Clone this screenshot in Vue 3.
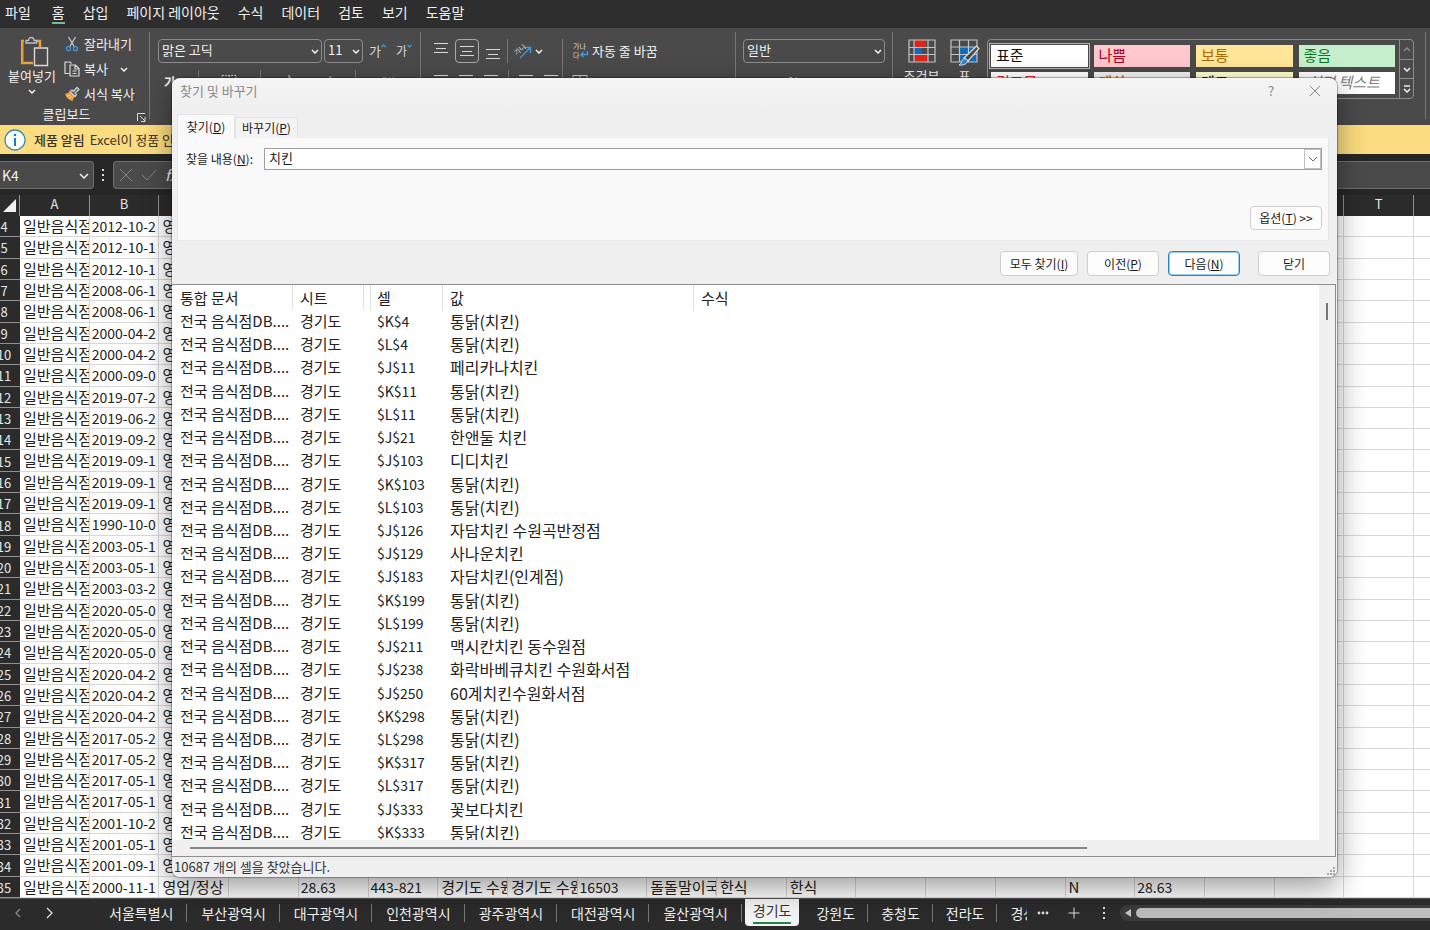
<script setup>
import { ref } from 'vue'

const menus = ['파일', '홈', '삽입', '페이지 레이아웃', '수식', '데이터', '검토', '보기', '도움말']

const styleCells = [
  { name: '표준', kind: 'normal' },
  { name: '나쁨', kind: 'bad' },
  { name: '보통', kind: 'neutral' },
  { name: '좋음', kind: 'good' },
  { name: '경고문', kind: 'warning' },
  { name: '계산', kind: 'calc' },
  { name: '메모', kind: 'memo' },
  { name: '설명 텍스트', kind: 'explain' },
]

const columns = [...'ABCDEFGHIJKLMNOPQRST', '']
const dates = [
  '2012-10-2', '2012-10-1', '2012-10-1', '2008-06-1', '2008-06-1', '2000-04-2', '2000-04-2', '2000-09-0',
  '2019-07-2', '2019-06-2', '2019-09-2', '2019-09-1', '2019-09-1', '2019-09-1', '1990-10-0', '2003-05-1',
  '2003-05-1', '2003-03-2', '2020-05-0', '2020-05-0', '2020-05-0', '2020-04-2', '2020-04-2', '2020-04-2',
  '2017-05-2', '2017-05-2', '2017-05-1', '2017-05-1', '2001-10-2', '2001-05-1', '2001-09-1', '2000-11-1',
]
const lastRow = { C: '영업/정상', E: '28.63', F: '443-821', G: '경기도 수원', H: '경기도 수원', I: '16503', J: '돌돌말이국', K: '한식', L: '한식', P: 'N', Q: '28.63' }
const rows = dates.map((date, i) => {
  const extra = i === dates.length - 1 ? lastRow : {}
  const values = { A: '일반음식점', B: date, C: '영', ...extra }
  return { n: i + 4, cells: columns.map((c) => values[c] || '') }
})
const isNumeric = (v) => /^[\d.-]+$/.test(v)

const fried = '통닭(치킨)'
const results = [
  ['$K$4', fried], ['$L$4', fried], ['$J$11', '페리카나치킨'], ['$K$11', fried], ['$L$11', fried],
  ['$J$21', '한앤둘 치킨'], ['$J$103', '디디치킨'], ['$K$103', fried], ['$L$103', fried],
  ['$J$126', '자담치킨 수원곡반정점'], ['$J$129', '사나운치킨'], ['$J$183', '자담치킨(인계점)'],
  ['$K$199', fried], ['$L$199', fried], ['$J$211', '맥시칸치킨 동수원점'],
  ['$J$238', '화락바베큐치킨 수원화서점'], ['$J$250', '60계치킨수원화서점'], ['$K$298', fried],
  ['$L$298', fried], ['$K$317', fried], ['$L$317', fried], ['$J$333', '꽃보다치킨'], ['$K$333', fried],
]

const sheets = ['서울특별시', '부산광역시', '대구광역시', '인천광역시', '광주광역시', '대전광역시', '울산광역시', '경기도', '강원도', '충청도', '전라도']
const query = ref('치킨')
</script>

<template>
  <div class="app">
    <nav class="menu">
      <button v-for="m in menus" :key="m" :class="{ on: m === '홈' }">{{ m }}</button>
    </nav>

    <header class="ribbon">
      <section class="group clipboard">
        <div class="clip-main">
          <button class="paste">
            <svg width="30" height="32" viewBox="0 0 30 32" fill="none">
              <path d="M5 5H3.200V27H14" stroke="#e9a13b" stroke-width="2.500" />
              <path d="M18 5H21V11" stroke="#e9a13b" stroke-width="2.500" />
              <path d="M7 7V4.500H9.500C9.500 0.500 15 0.500 15 4.500H17.500V7Z" fill="#4a4a4a" stroke="#bdbdbd" stroke-width="1.300" />
              <path d="M15.500 12H28.500V29.500H15.500Z" fill="#4a4a4a" stroke="#d8d8d8" stroke-width="1.400" />
            </svg>
            <span>붙여넣기</span>
            <svg class="chev" width="8" height="5" viewBox="0 0 8 5"><path d="M1 1L4 4L7 1" /></svg>
          </button>
          <div class="clip-list">
            <button>
              <svg width="16" height="16" viewBox="0 0 16 16" fill="none">
                <path d="M4.500 1L10.500 11M11.500 1L5.500 11" stroke="#cfcfcf" stroke-width="1.200" />
                <circle cx="4.500" cy="12.700" r="2" stroke="#3d9be0" stroke-width="1.300" /><circle cx="11.500" cy="12.700" r="2" stroke="#3d9be0" stroke-width="1.300" />
              </svg>잘라내기
            </button>
            <button>
              <svg width="16" height="16" viewBox="0 0 16 16" fill="none" stroke="#d8d8d8" stroke-width="1.200">
                <path d="M5.500 12.500H1V1H6L7.500 2.500" /><path d="M6 4H11.500L15 7.500V15H6ZM11 4V8H15M8.500 10H12.500M8.500 12.500H12.500" />
              </svg>복사
              <svg class="chev more" width="8" height="5" viewBox="0 0 8 5"><path d="M1 1L4 4L7 1" /></svg>
            </button>
            <button>
              <svg width="16" height="16" viewBox="0 0 16 16" fill="none">
                <path d="M1 8L6 6L10.500 10.500L8.500 15C5 14 2 11.500 1 8Z" fill="#e9a13b" /><path d="M3 10L6 9.500M5 12.500L7.500 11" stroke="#fbe2b8" />
                <path d="M6 5.500L8 4L9.500 5.500L13 1.500L15 3.500L11 7L12.500 8.500L11 10.500Z" fill="#4a4a4a" stroke="#d8d8d8" stroke-width="1.200" />
              </svg>서식 복사
            </button>
          </div>
        </div>
        <div class="caption">클립보드
          <svg class="launch" width="9" height="9" viewBox="0 0 9 9" fill="none" stroke="#d8d8d8"><path d="M0.500 8V0.500H8M3 3L8 8M8 4V8.500H4" /></svg>
        </div>
      </section>

      <section class="group font">
        <div class="line">
          <label class="pick face"><select aria-label="글꼴"><option>맑은 고딕</option></select><svg class="chev" width="8" height="5" viewBox="0 0 8 5"><path d="M1 1L4 4L7 1" /></svg></label>
          <label class="pick size"><select aria-label="글꼴 크기"><option>11</option></select><svg class="chev" width="8" height="5" viewBox="0 0 8 5"><path d="M1 1L4 4L7 1" /></svg></label>
          <button class="grow" aria-label="글꼴 크기 크게">가<svg class="blue" width="5" height="4" viewBox="0 0 5 4"><path d="M0.500 3L2.500 1L4.500 3" /></svg></button>
          <button class="grow less" aria-label="글꼴 크기 작게">가<svg class="blue" width="5" height="4" viewBox="0 0 5 4"><path d="M0.500 1L2.500 3L4.500 1" /></svg></button>
        </div>
        <div class="line second">
          <button><b>가</b></button>
          <i class="bar"></i>
          <svg width="16" height="16" viewBox="0 0 16 16" fill="none" stroke="#c8c8c8"><path d="M1 1.500H15V15H1ZM8 1V15M1 8H15" stroke-dasharray="2 1" /></svg>
          <i class="bar"></i>
          <svg width="16" height="16" viewBox="0 0 16 16" fill="none" stroke="#c8c8c8"><path d="M6 1V4M2 8L7 3L12 8L7 13Z" /></svg>
          <button>가</button>
          <i class="bar"></i>
          <button class="tiny">내천</button>
        </div>
      </section>

      <section class="group align">
        <div class="align-left">
          <div class="line">
            <button aria-label="위쪽 맞춤"><svg class="rule" width="16" height="24" viewBox="0 0 16 24"><path d="M1 4.500H15M3 9.500H13M1 13.500H15" /></svg></button>
            <button class="boxed" aria-label="가운데 맞춤"><svg class="rule" width="16" height="24" viewBox="0 0 16 24"><path d="M1 7.500H15M3 12.500H13M1 16.500H15" /></svg></button>
            <button aria-label="아래쪽 맞춤"><svg class="rule" width="16" height="24" viewBox="0 0 16 24"><path d="M1 10.500H15M3 15.500H13M1 19.500H15" /></svg></button>
            <i class="bar"></i>
            <button class="orient" aria-label="방향">
              <svg width="18" height="18" viewBox="0 0 18 18" fill="none"><path d="M6 16L16 6M11 5.500H16.500V11" stroke="#3d9be0" stroke-width="1.300" /><text x="0" y="11" font-size="7" fill="#d8d8d8" transform="rotate(-40 5 9)">가나</text></svg>
              <svg class="chev" width="8" height="5" viewBox="0 0 8 5"><path d="M1 1L4 4L7 1" /></svg>
            </button>
          </div>
          <div class="line second">
            <svg v-for="k in 3" :key="k" class="rule" width="16" height="16" viewBox="0 0 16 16"><path d="M1 1.500H15M1 6.500H10M1 11.500H15" /></svg>
            <i class="bar"></i>
            <svg v-for="k in 2" :key="'i' + k" class="rule" width="16" height="16" viewBox="0 0 16 16"><path d="M1 1.500H15M7 6.500H15M1 11.500H15" /></svg>
          </div>
        </div>
        <div class="align-right">
          <button class="wrap">
            <svg width="17" height="18" viewBox="0 0 17 18" fill="none"><text x="1" y="7" font-size="7" fill="#d8d8d8">가나</text><text x="1" y="16" font-size="7" fill="#d8d8d8">다</text><path d="M15.500 9V12.500H9M11.500 10L9 12.500L11.500 15" stroke="#3d9be0" stroke-width="1.400" /></svg>
            자동 줄 바꿈
          </button>
          <div class="line second"><svg width="16" height="16" viewBox="0 0 16 16" fill="none" stroke="#c8c8c8"><path d="M1 1.500H15V14.500H1ZM1 5H15M8 1V5" /></svg></div>
        </div>
      </section>

      <section class="group number">
        <label class="pick"><select aria-label="표시 형식"><option>일반</option></select><svg class="chev" width="8" height="5" viewBox="0 0 8 5"><path d="M1 1L4 4L7 1" /></svg></label>
        <div class="line second"><button>%</button><button>,</button><i class="bar"></i><button class="tiny">.00</button><button class="tiny">.00</button></div>
      </section>

      <section class="group styles">
        <button class="big">
          <svg width="28" height="24" viewBox="0 0 28 24" fill="none">
            <path d="M6 1H18V8H6ZM6 16H20V23H6Z" fill="#e2231a" /><path d="M6 8.500H14V15.500H6Z" fill="#0f6cbd" />
            <path d="M1 1H27V23H1ZM1 8.500H27M1 15.500H27M6 1V23M20 1V23" stroke="#c4c4c4" stroke-width="1.200" />
          </svg>조건부
        </button>
        <button class="big">
          <svg width="30" height="28" viewBox="0 0 30 28" fill="none">
            <path d="M10 8H27V23H10Z" fill="#0f6cbd" /><path d="M1 1H27V23H1ZM1 8H27M1 15.500H27M9.500 1V23M18.500 1V23" stroke="#c4c4c4" stroke-width="1.200" />
            <path d="M14 19L26.500 7L29 9.500L18 22Z" fill="#4a4a4a" stroke="#e0e0e0" stroke-width="1.200" /><path d="M9 26C12 25 11 20 15 19.500C20 21 17 27 9 26Z" fill="#2b88d8" stroke="#e0e0e0" />
          </svg>표
        </button>
        <div class="gallery">
          <div class="cells"><button v-for="s in styleCells" :key="s.name" :class="s.kind">{{ s.name }}</button></div>
          <div class="gallery-nav">
            <button aria-label="위로"><svg class="chev dim" width="8" height="5" viewBox="0 0 8 5"><path d="M1 4L4 1L7 4" /></svg></button>
            <button aria-label="아래로"><svg class="chev" width="8" height="5" viewBox="0 0 8 5"><path d="M1 1L4 4L7 1" /></svg></button>
            <button aria-label="자세히"><svg class="chev" width="8" height="8" viewBox="0 0 8 8"><path d="M1 1H7M1 4L4 7L7 4" /></svg></button>
          </div>
        </div>
      </section>
    </header>

    <div class="notice">
      <svg width="22" height="22" viewBox="0 0 22 22"><circle cx="11" cy="11" r="10" fill="#fff" stroke="#3a8fb0" stroke-width="1.300" /><circle cx="11" cy="6" r="1.300" fill="#1979ca" /><path d="M11 9V17" stroke="#1979ca" stroke-width="2" /></svg>
      <b>제품 알림</b><span>Excel이 정품 인</span>
    </div>

    <div class="formula">
      <label class="namebox"><input value="K4" aria-label="이름 상자" /><svg class="chev" width="10" height="7" viewBox="0 0 10 7"><path d="M1 1L5 5L9 1" /></svg></label>
      <svg class="dots" width="3" height="12" viewBox="0 0 3 12" fill="#ddd"><path d="M0 0H2V2H0ZM0 5H2V7H0ZM0 10H2V12H0Z" /></svg>
      <div class="fx">
        <svg width="14" height="14" viewBox="0 0 14 14"><path d="M1 1L13 13M13 1L1 13" /></svg>
        <svg width="16" height="14" viewBox="0 0 16 14"><path d="M1 7L6 12L15 2" /></svg>
        <i>fx</i>
      </div>
    </div>

    <table class="sheet">
      <thead>
        <tr><th class="corner"><svg width="14" height="14" viewBox="0 0 14 14"><path d="M13 0V13H0Z" fill="#f0f0f0" /></svg></th><th v-for="c in columns" :key="c">{{ c }}</th></tr>
      </thead>
      <tbody>
        <tr v-for="r in rows" :key="r.n"><th>{{ r.n }}</th><td v-for="(v, i) in r.cells" :key="i" :class="{ num: isNumeric(v) }">{{ v }}</td></tr>
      </tbody>
    </table>

    <footer class="tabs">
      <button class="arrow" aria-label="이전 시트"><svg width="8" height="12" viewBox="0 0 8 12"><path d="M6 2L2 6L6 10" /></svg></button>
      <button class="arrow lit" aria-label="다음 시트"><svg width="8" height="12" viewBox="0 0 8 12"><path d="M2 1L7 6L2 11" /></svg></button>
      <div class="sheets">
        <button v-for="s in sheets" :key="s" :class="{ current: s === '경기도' }"><span>{{ s }}</span></button>
        <button class="cut">경상도</button>
      </div>
      <button class="tool" aria-label="시트 목록"><svg width="12" height="4" viewBox="0 0 12 4" fill="#ddd"><circle cx="2" cy="2" r="1.400" /><circle cx="6" cy="2" r="1.400" /><circle cx="10" cy="2" r="1.400" /></svg></button>
      <button class="tool" aria-label="새 시트"><svg width="12" height="12" viewBox="0 0 12 12" stroke="#ddd"><path d="M6 0.500V11.500M0.500 6H11.500" /></svg></button>
      <button class="tool" aria-label="크기 조절"><svg width="3" height="12" viewBox="0 0 3 12" fill="#ddd"><path d="M0 0H2V2H0ZM0 5H2V7H0ZM0 10H2V12H0Z" /></svg></button>
      <div class="hscroll"><svg width="8" height="10" viewBox="0 0 8 10"><path d="M7 1V9L1 5Z" fill="#c4c4c4" /></svg><div></div></div>
    </footer>

    <div class="dialog" role="dialog" aria-labelledby="dlg-title">
      <div class="title">
        <span id="dlg-title">찾기 및 바꾸기</span>
        <button aria-label="도움말">?</button>
        <button aria-label="창 닫기"><svg width="12" height="12" viewBox="0 0 12 12" stroke="#888"><path d="M1 1L11 11M11 1L1 11" /></svg></button>
      </div>
      <div class="dtabs"><button class="active">찾기(<u>D</u>)</button><button>바꾸기(<u>P</u>)</button></div>
      <div class="panel">
        <div class="find">
          <label for="what">찾을 내용(<u>N</u>):</label>
          <div class="combo"><input id="what" v-model="query" /><button aria-label="목록 열기"><svg width="10" height="6" viewBox="0 0 10 6" fill="none" stroke="#666"><path d="M1 1L5 5L9 1" /></svg></button></div>
        </div>
        <button class="btn option">옵션(<u>T</u>) &gt;&gt;</button>
      </div>
      <div class="actions">
        <button class="btn wide">모두 찾기(<u>I</u>)</button>
        <button class="btn">이전(<u>P</u>)</button>
        <button class="btn primary">다음(<u>N</u>)</button>
        <button class="btn close">닫기</button>
      </div>
      <div class="list">
        <div class="list-body">
          <table class="found">
            <thead><tr><th>통합 문서</th><th>시트</th><th>셀</th><th>값</th><th>수식</th></tr></thead>
            <tbody><tr v-for="r in results" :key="r[0]"><td>전국 음식점DB....</td><td>경기도</td><td class="ref">{{ r[0] }}</td><td class="value">{{ r[1] }}</td><td></td></tr></tbody>
          </table>
          <div class="vbar"><div></div></div>
        </div>
        <div class="hbar"><div></div></div>
      </div>
      <div class="status"><span>10687 개의 셀을 찾았습니다.</span>
        <svg width="9" height="9" viewBox="0 0 9 9" fill="#a8a8a8"><path d="M6 0H8V2H6ZM3 3H5V5H3ZM6 3H8V5H6ZM0 6H2V8H0ZM3 6H5V8H3ZM6 6H8V8H6Z" /></svg>
      </div>
    </div>
  </div>
</template>

<style>
html, body { margin: 0; height: 100%; overflow: hidden; }
</style>

<style scoped>
.app {
  position: relative; display: flex; flex-direction: column; height: 100vh; overflow: hidden;
  background: #262626; color: #f0f0f0; font-family: "Noto Sans CJK KR", sans-serif; font-size: 13px; line-height: 18px;
}
.app * { box-sizing: border-box; }
button, input, select { font: inherit; color: inherit; background: none; border: 0; padding: 0; margin: 0; white-space: nowrap; }
svg { flex: none; display: block; }
.chev { fill: none; stroke: #f0f0f0; stroke-width: 1.5; }
.chev.dim { stroke: #8a8a8a; }

.menu { display: flex; flex: none; height: 28px; padding: 0 5px; gap: 18px; background: #2e2e2e; font-size: 14px; }
.menu button { height: 24px; padding-top: 2px; border-bottom: 2px solid transparent; }
.menu button:first-child { margin-right: 3px; }
.menu .on { border-color: #6fbf92; }

.ribbon { display: flex; flex: none; height: 97px; padding: 4px 4px 6px 0; background: #4a4a4a; overflow: hidden; }
.group { border-right: 1px solid #767676; flex: none; }
.line { display: flex; align-items: center; height: 24px; }
.second { margin-top: 7px; }
.bar { width: 1px; height: 24px; background: #767676; }
.clipboard { width: 150px; display: flex; flex-direction: column; }
.clip-main { display: flex; flex: 1; }
.paste { width: 64px; display: flex; flex-direction: column; align-items: center; padding-top: 4px; }
.paste svg:first-child { margin-left: 4px; }
.paste span { line-height: 16px; }
.paste .chev { margin-top: 5px; }
.clip-list { display: flex; flex-direction: column; gap: 1px; }
.clip-list button { display: flex; align-items: center; gap: 4px; height: 24px; }
.more { margin-left: 8px; }
.caption { display: flex; justify-content: center; position: relative; padding-right: 16px; line-height: 16px; }
.launch { position: absolute; right: 3px; bottom: 0; }
.pick { position: relative; display: block; height: 24px; }
.pick select { appearance: none; width: 100%; height: 24px; padding: 0 3px 2px; border: 1px solid #8c8c8c; border-radius: 4px; line-height: 20px; }
.pick .chev { position: absolute; right: 3px; top: 10px; }
.font { width: 271px; padding: 7px 8px 0; }
.face { width: 164px; }
.size { width: 39px; margin-left: 2px; }
.grow { display: flex; margin-left: 6px; color: #d8d8d8; }
.less { font-size: 12px; margin-left: 10px; }
.blue { fill: none; stroke: #3d9be0; stroke-width: 1.3; margin-top: 2px; }
.font .second { justify-content: space-between; padding: 0 17px 0 6px; }
.tiny { font-size: 9px; }
.align { display: flex; width: 315px; padding-top: 7px; }
.align-left { width: 142px; padding-left: 8px; border-right: 1px solid #767676; }
.align-left .line { gap: 2px; }
.align-left button { width: 24px; height: 24px; display: flex; align-items: center; justify-content: center; }
.align-left .orient { width: 36px; gap: 3px; }
.boxed { border: 1px solid #a8a8a8 !important; border-radius: 4px; }
.rule { fill: none; stroke: #d8d8d8; }
.align-left .second { gap: 9px; padding-left: 4px; }
.align-right { padding-left: 9px; }
.wrap { display: flex; align-items: center; gap: 3px; height: 24px; }
.number { width: 157px; padding: 7px 7px 0; }
.number .second { gap: 15px; padding-left: 45px; }
.styles { flex: 1; display: flex; padding: 7px 11px 0 7px; }
.big { width: 43px; display: flex; flex-direction: column; align-items: center; height: 46px; justify-content: space-between; }
.gallery { display: flex; flex: 1; height: 60px; margin-left: 1px; border: 1px solid #8c8c8c; border-radius: 4px; overflow: hidden; }
.cells { flex: 1; display: grid; grid-template-columns: repeat(4, 1fr); grid-template-rows: 22px 22px; gap: 5px 6px; padding: 5px 4px 0 3px; }
.cells button { text-align: left; padding: 0 0 3px 5px; font-size: 15px; line-height: 18px; color: #111; background: #fff; }
.cells .normal { outline: 1px solid #b5b5b5; outline-offset: 1px; }
.cells .bad { background: #ffc7ce; color: #b00020; }
.cells .neutral { background: #ffe699; color: #b06a00; }
.cells .good { background: #c6efce; color: #0b7a1a; }
.cells .warning { color: #d22; }
.cells .calc { background: #f2f2f2; color: #e87b10; font-weight: 700; }
.cells .memo { background: #ffffcc; }
.cells .explain { padding-left: 9px; color: #808080; font-style: italic; }
.gallery-nav { width: 14px; display: flex; flex-direction: column; border-left: 1px solid #8c8c8c; }
.gallery-nav button { flex: 1; display: flex; align-items: center; justify-content: center; }
.gallery-nav button + button { border-top: 1px solid #8c8c8c; }

.notice { display: flex; flex: none; align-items: center; height: 29px; padding-left: 4px; background: #fcdc80; color: #3b3322; white-space: nowrap; }
.notice b { margin: 0 5px 0 8px; font-weight: 500; }

.formula { display: flex; flex: none; align-items: center; height: 41px; padding-top: 1px; background: #262626; }
.namebox { position: relative; width: 94px; height: 28px; }
.namebox input { width: 100%; height: 28px; padding: 0 0 1px 2px; background: #4a4a4a; border: 1px solid #6e6e6e; border-left: 0; border-radius: 0 4px 4px 0; font-size: 14px; }
.namebox .chev { position: absolute; right: 5px; top: 12px; }
.dots { margin: 0 8px 0 8px; }
.fx { display: flex; align-items: center; flex: 1; gap: 8px; height: 28px; padding-left: 5px; border: 1px solid #6e6e6e; border-right: 0; border-radius: 4px 0 0 4px; background: #4a4a4a; font-size: 15px; }
.fx svg { fill: none; stroke: #858585; }

.sheet { display: flex; flex-direction: column; flex: 1; min-height: 0; background: #fff; color: #222; font-size: 15px; }
.sheet tr { display: grid; grid-template-columns: 20px repeat(20, minmax(0, 279fr)) minmax(0, 64fr); }
.sheet thead { display: block; flex: none; height: 21px; background: #2b2b2b; color: #e6e6e6; }
.sheet thead th { height: 21px; padding: 0; border-right: 1px solid #909090; font-size: 13px; font-weight: 400; line-height: 17px; }
.sheet thead th:last-child, .sheet td:last-child { border-right: 0; }
.sheet .corner { display: flex; align-items: flex-end; justify-content: center; padding-bottom: 3px; }
.sheet tbody { display: flex; flex-direction: column; flex: 1; min-height: 0; }
.sheet tbody tr { flex: 1; min-height: 0; }
.sheet tbody th { padding: 2px 12px 0 0; display: flex; overflow: hidden; justify-content: center; align-items: center; background: #2b2b2b; color: #e6e6e6; border-bottom: 1px solid #909090; font-size: 13px; font-weight: 400; line-height: 18px; }
.sheet td { padding: 0 0 0 3px; overflow: hidden; white-space: nowrap; line-height: 20px; border: 0 solid #d8d8d8; border-width: 0 1px 1px 0; }
.sheet .num { padding-left: 2px; font-size: 14px; }

.tabs { display: flex; flex: none; align-items: center; height: 32px; padding-bottom: 3px; background: #2b2b2b; border-top: 1px solid #555; font-size: 14px; }
.arrow { width: 31px; display: flex; justify-content: center; }
.arrow:first-child { margin-left: 2px; }
.arrow svg { fill: none; stroke: #8a8a8a; stroke-width: 1.3; }
.lit svg { stroke: #e0e0e0; }
.sheets { display: flex; height: 28px; margin-left: 31px; overflow: hidden; align-items: center; width: 932px; }
.sheets button { flex: none; height: 18px; padding: 0 13px 0 14px; border-right: 1px solid #777; }
.sheets .current { align-self: flex-start; height: 27px; padding: 0 8px; margin: 0 4px 0 3px; border: 0; border-radius: 0 0 4px 4px; background: #f4f4f4; color: #333; }
.sheets .current ~ button { padding: 0 12px 0 13px; }
.current span { display: block; height: 23px; border-bottom: 2px solid #1e8449; }
.sheets .cut { border: 0; }
.tool { width: 31px; display: flex; justify-content: center; }
.hscroll { display: flex; align-items: center; flex: 1; height: 16px; padding-left: 4px; gap: 4px; background: #3b3b3b; border-radius: 8px 0 0 8px; }
.hscroll div { flex: 1; height: 10px; border-radius: 5px 0 0 5px; background: #bdbdbd; }

.dialog { position: absolute; left: 172px; right: 93px; top: 78px; bottom: 53px; display: flex; flex-direction: column; border-radius: 8px; background: linear-gradient(#f4f4f4, #efefef 36px); color: #1a1a1a; overflow: hidden; box-shadow: 0 0 1px 1px rgba(0, 0, 0, .3), 0 10px 30px rgba(0, 0, 0, .4); font-size: 12px; }
.title { display: flex; flex: none; align-items: center; height: 36px; padding: 0 0 10px 8px; color: #888; font-size: 13px; }
.title span { flex: 1; }
.title button { width: 44px; display: flex; justify-content: center; }
.dtabs { display: flex; flex: none; align-items: flex-end; height: 24px; padding-left: 5px; }
.dtabs button { height: 21px; width: 63px; border: 1px solid #e4e4e4; border-bottom: 0; background: #f3f3f3; }
.dtabs .active { height: 24px; width: 58px; background: #f9f9f9; }
.panel { display: flex; flex: none; flex-direction: column; align-items: flex-end; justify-content: space-between; height: 103px; margin: 0 8px 0 5px; padding: 10px 6px; border: 1px solid #e8e8e8; border-top: 0; background: #f9f9f9; }
.find { display: flex; align-items: center; align-self: stretch; }
.find label { width: 80px; padding-left: 2px; white-space: nowrap; }
.combo { flex: 1; display: flex; height: 22px; border: 1px solid #a0a0a0; background: #fff; }
.combo input { flex: 1; padding: 0 4px 2px; outline: 0; font-size: 13px; }
.combo button { width: 17px; display: flex; align-items: center; justify-content: center; border: 1px solid #c0c0c0; }
.btn { width: 72px; height: 25px; border: 1px solid #cdcdcd; border-radius: 4px; background: #fdfdfd; }
.option { height: 24px; }
.actions { display: flex; flex: none; justify-content: flex-end; gap: 9px; padding: 10px 7px 8px; }
.actions .wide { width: 78px; }
.actions .primary { border: 1px solid #2583c8; box-shadow: inset 0 0 0 1px #9ccbee; }
.actions .close { margin-left: 9px; }
.list { display: flex; flex: 1; min-height: 0; flex-direction: column; margin-right: 1px; border: 1px solid #8e8e8e; border-left: 0; background: #fff; font-size: 15px; }
.list-body { display: flex; flex: 1; min-height: 0; }
.found { display: flex; flex: 1; flex-direction: column; color: #222; overflow: hidden; }
.found tr { display: grid; grid-template-columns: 121px 71px 79px 251px 1fr; }
.found th, .found td { padding: 0 0 0 8px; text-align: left; font-weight: 400; white-space: nowrap; line-height: 22px; }
.found thead { display: block; flex: none; height: 25px; }
.found th { height: 25px; border-right: 1px solid #e0e0e0; padding-left: 7px; line-height: 25px; }
.found th:first-child { padding-left: 8px; }
.found td:nth-child(n + 2) { padding-left: 7px; }
.found th:last-child { border: 0; }
.found th:nth-child(3), .found td:nth-child(3) { margin-left: 6px; }
.found th:nth-child(3) { border-left: 1px solid #e0e0e0; padding-left: 6px; }
.found tbody { display: flex; flex: 1; min-height: 0; flex-direction: column; margin-bottom: -4px; }
.found tbody tr { flex: 1; min-height: 0; }
.found .ref { font-size: 14px; }
.found .value { font-size: 16px; }
.vbar { width: 16px; background: #f0f0f0; padding: 18px 0 0 7px; }
.vbar div { width: 2px; height: 17px; background: #777; }
.hbar { flex: none; height: 16px; padding: 7px 248px 0 18px; background: #f0f0f0; }
.hbar div { height: 2px; background: #858585; }
.status { display: flex; flex: none; align-items: center; justify-content: space-between; height: 20px; padding-left: 2px; font-size: 13px; color: #333; }
.status svg { align-self: flex-end; margin: 0 1px 1px 0; }
</style>
